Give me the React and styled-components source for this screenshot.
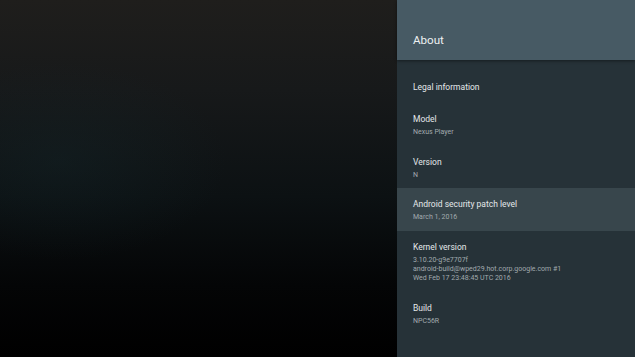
import React from "react";
import styled, { createGlobalStyle } from "styled-components";

const GlobalStyle = createGlobalStyle`
  html, body {
    margin: 0;
    padding: 0;
    background: #000;
  }
  body {
    font-family: Roboto, "Liberation Sans", sans-serif;
    -webkit-font-smoothing: antialiased;
  }
`;

const Screen = styled.div`
  display: flex;
  width: 635px;
  height: 357px;
  overflow: hidden;
`;

const Backdrop = styled.div`
  flex: 1;
  background:
    radial-gradient(ellipse 60% 40% at 15% 45%, rgba(20, 40, 44, 0.35), rgba(20, 40, 44, 0) 70%),
    linear-gradient(to bottom, #1f1e1c 0%, #17191a 25%, #0c1113 55%, #040506 80%, #000 100%);
`;

const Panel = styled.div`
  width: 238px;
  display: flex;
  flex-direction: column;
  background: #263238;
`;

const Header = styled.div`
  position: relative;
  z-index: 1;
  height: 60px;
  flex-shrink: 0;
  display: flex;
  align-items: flex-end;
  box-sizing: border-box;
  padding: 0 16px 13px;
  background: #475a64;
  box-shadow: 0 1px 3px rgba(0, 0, 0, 0.45);
`;

const Title = styled.h1`
  margin: 0;
  font-size: 11.6px;
  font-weight: 400;
  line-height: 14px;
  color: #eef1f2;
`;

const ListViewport = styled.div`
  flex: 1;
  overflow: hidden;
`;

const List = styled.div`
  margin-top: ${(p) => p.$scroll}px;
  display: flex;
  flex-direction: column;
`;

const Row = styled.div`
  display: flex;
  flex-direction: column;
  padding: 10px 16px ${(p) => (p.$single ? 10 : 8.7)}px;
  background: ${(p) => (p.$focused ? "#38464c" : "transparent")};
`;

const RowTitle = styled.div`
  font-size: 8.5px;
  line-height: 12px;
  color: #e4e8ea;
  white-space: nowrap;
`;

const RowSub = styled.div`
  margin-top: 3px;
  font-size: 7px;
  line-height: 9px;
  color: #a1aaae;
  white-space: pre;
`;

const items = [
  { title: "Status", sub: "Network, serial numbers and other information" },
  { title: "Legal information" },
  { title: "Model", sub: "Nexus Player" },
  { title: "Version", sub: "N" },
  { title: "Android security patch level", sub: "March 1, 2016", focused: true },
  {
    title: "Kernel version",
    sub: "3.10.20-g9e7707f\nandroid-build@wped29.hot.corp.google.com #1\nWed Feb 17 23:48:45 UTC 2016",
  },
  { title: "Build", sub: "NPC56R" },
];

export default function App() {
  return (
    <>
      <GlobalStyle />
      <Screen>
        <Backdrop />
        <Panel>
          <Header>
            <Title>About</Title>
          </Header>
          <ListViewport>
            <List $scroll={-31.7}>
              {items.map((item) => (
                <Row key={item.title} $single={!item.sub} $focused={item.focused}>
                  <RowTitle>{item.title}</RowTitle>
                  {item.sub && <RowSub>{item.sub}</RowSub>}
                </Row>
              ))}
            </List>
          </ListViewport>
        </Panel>
      </Screen>
    </>
  );
}
